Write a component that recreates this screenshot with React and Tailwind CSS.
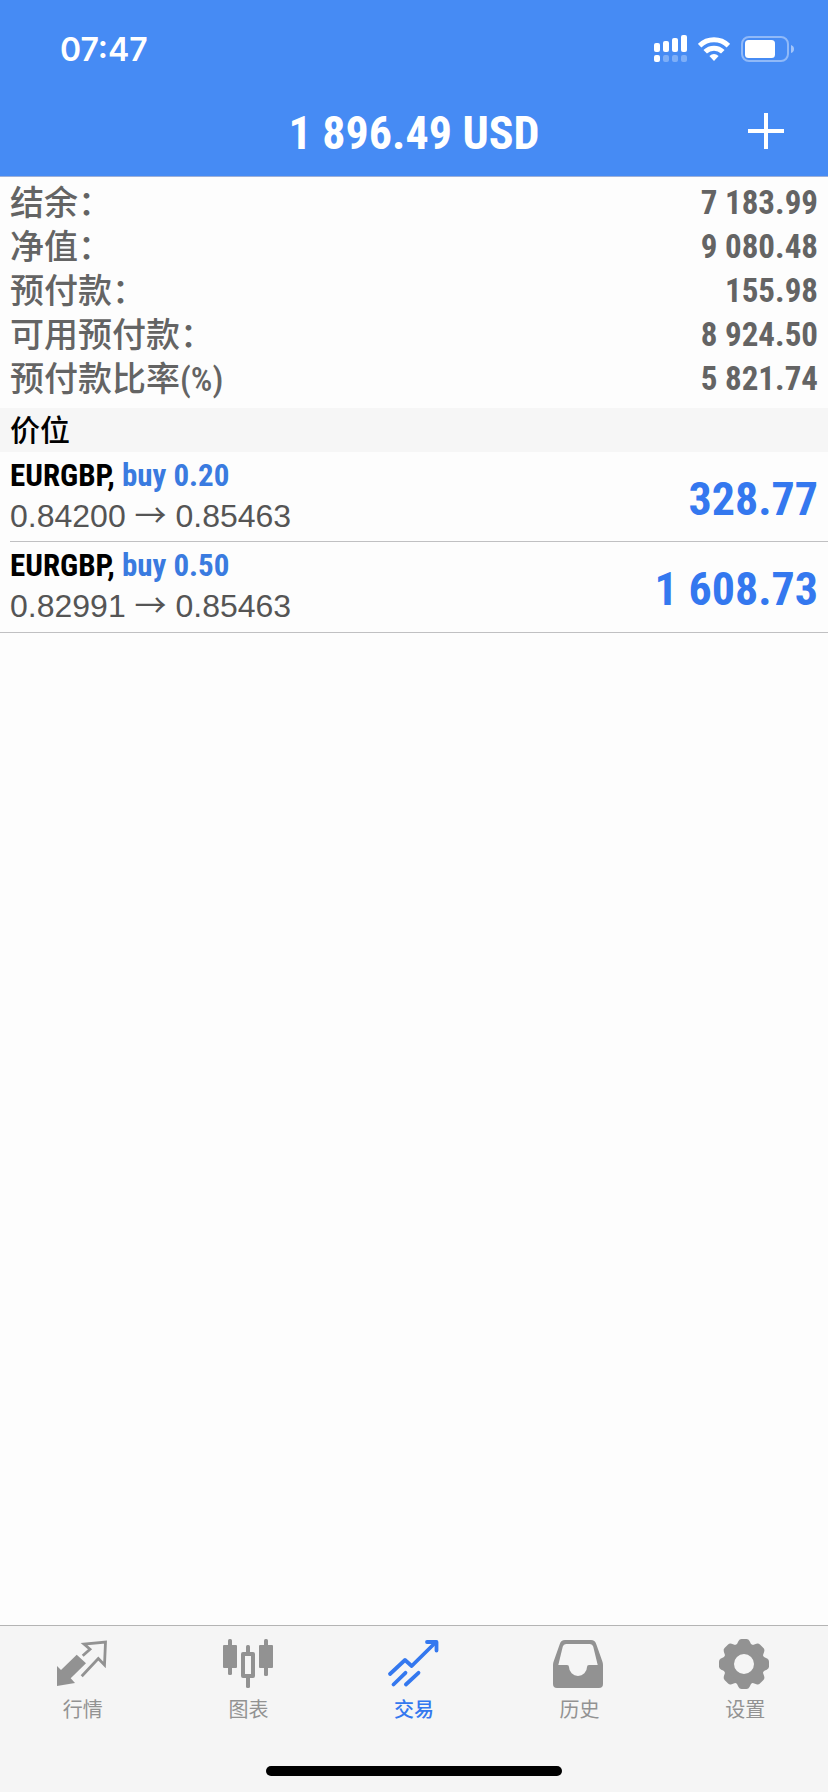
import { useState } from 'react';

const summary = [
  { label: '结余：', value: '7 183.99' },
  { label: '净值：', value: '9 080.48' },
  { label: '预付款：', value: '155.98' },
  { label: '可用预付款：', value: '8 924.50' },
  { label: '预付款比率(%)', value: '5 821.74' },
];

const positions = [
  { id: 1, symbol: 'EURGBP', side: 'buy 0.20', open: '0.84200', current: '0.85463', profit: '328.77' },
  { id: 2, symbol: 'EURGBP', side: 'buy 0.50', open: '0.82991', current: '0.85463', profit: '1 608.73' },
];

const toothAngles = [0, 45, 90, 135, 180, 225, 270, 315];

function QuotesIcon() {
  return (
    <svg viewBox="0 0 54 52" className="w-[54px] h-[52px]" aria-hidden="true">
      <path d="M1 28 L5 32 L20.7 16.7 L30 25.3 L14.7 40.3 L19 45 L1 48 Z" fill="currentColor" />
      <path
        d="M26.7 17.7 L34 11.3 L28 6 L49.5 4 L48.5 27 L42.3 20.5 L25.7 38.3"
        fill="none"
        stroke="currentColor"
        strokeWidth="2.8"
      />
    </svg>
  );
}

function ChartIcon() {
  return (
    <svg viewBox="0 0 54 52" className="w-[54px] h-[52px]" fill="currentColor" aria-hidden="true">
      <rect x="2" y="7" width="14" height="23" rx="1" />
      <rect x="7" y="1" width="4" height="36" rx="1.5" />
      <rect x="25" y="7" width="4" height="9" rx="1.5" />
      <rect x="25" y="38" width="4" height="12" rx="1.5" />
      <rect x="22" y="16" width="10" height="22" fill="none" stroke="currentColor" strokeWidth="4" strokeLinejoin="round" />
      <rect x="38" y="7" width="14" height="23" rx="1" />
      <rect x="43" y="1" width="4" height="37" rx="1.5" />
    </svg>
  );
}

function TradeIcon() {
  return (
    <svg
      viewBox="0 0 54 52"
      className="w-[54px] h-[52px]"
      fill="none"
      stroke="currentColor"
      strokeWidth="3.8"
      strokeLinecap="round"
      strokeLinejoin="round"
      aria-hidden="true"
    >
      <path d="M3 36 L18 22 L24.7 28 L48 5" />
      <path d="M40 4 H49.5 V12.5" />
      <path d="M6.5 46.5 L18.5 34.8" />
      <path d="M18.9 46.5 L31.5 34.8" />
    </svg>
  );
}

function HistoryIcon() {
  return (
    <svg viewBox="0 0 54 52" className="w-[54px] h-[52px]" fill="currentColor" aria-hidden="true">
      <path
        fillRule="evenodd"
        d="M12 2 H38 Q42 2 43.2 6 L49.2 23 Q50 25 50 27 V46 Q50 50 46 50 H4 Q0 50 0 46 V27 Q0 25 0.8 23 L6.8 6 Q8 2 12 2 Z
           M13 6 Q10.5 6 9.8 8.5 L5.3 27 H14 Q16 27 16 29 A9 9 0 0 0 34 29 Q34 27 36 27 H44.7 L40.2 8.5 Q39.5 6 37 6 Z"
      />
    </svg>
  );
}

function SettingsIcon() {
  return (
    <svg viewBox="0 0 54 52" className="w-[54px] h-[52px]" fill="currentColor" aria-hidden="true">
      <circle cx="26" cy="26" r="15.5" fill="none" stroke="currentColor" strokeWidth="11" />
      {toothAngles.map((angle) => (
        <path key={angle} d="M17.5 9 L20.5 3 Q21.5 1 23.5 1 H28.5 Q30.5 1 31.5 3 L34.5 9 Z" transform={`rotate(${angle} 26 26)`} />
      ))}
    </svg>
  );
}

const tabs = [
  { id: 'quotes', label: '行情', Icon: QuotesIcon },
  { id: 'chart', label: '图表', Icon: ChartIcon },
  { id: 'trade', label: '交易', Icon: TradeIcon },
  { id: 'history', label: '历史', Icon: HistoryIcon },
  { id: 'settings', label: '设置', Icon: SettingsIcon },
];

function StatusBar() {
  return (
    <div className="flex items-center justify-between h-[98px] pl-[60px] pr-[34px]">
      <span className="pt-0.5 font-['Inter',sans-serif] text-[32px] font-semibold">07:47</span>
      <div className="flex items-center gap-[11px]">
        {/* cellular, two SIMs */}
        <svg viewBox="0 0 33 28" className="w-[33px] h-7" fill="currentColor" aria-hidden="true">
          <rect x="0" y="8" width="6" height="9" rx="2" />
          <rect x="9" y="6" width="6" height="11" rx="2" />
          <rect x="18" y="3" width="6" height="14" rx="2" />
          <rect x="27" y="0" width="6" height="17" rx="2" />
          <rect x="0" y="20" width="6" height="7" rx="2" />
          <rect x="9" y="20" width="6" height="7" rx="2" opacity="0.3" />
          <rect x="18" y="20" width="6" height="7" rx="2" opacity="0.3" />
          <rect x="27" y="20" width="6" height="7" rx="2" opacity="0.3" />
        </svg>
        <svg viewBox="0 0 32 26" className="w-8 h-[26px]" fill="none" stroke="currentColor" strokeWidth="5" aria-hidden="true">
          <path d="M1.6 9.6 A20.5 20.5 0 0 1 30.4 9.6" />
          <path d="M7.2 15.8 A12.5 12.5 0 0 1 24.8 15.8" />
          <path d="M11.4 20 Q16 16.2 20.6 20 L16 25 Z" fill="currentColor" stroke="none" />
        </svg>
        <svg viewBox="0 0 53 26" className="w-[53px] h-[26px]" aria-hidden="true">
          <rect x="1" y="1" width="46" height="24" rx="7" fill="none" stroke="currentColor" strokeWidth="2" opacity="0.4" />
          <rect x="4" y="4" width="30" height="18" rx="3.5" fill="currentColor" />
          <path d="M50 9 Q53 10 53 13 T50 17 Z" fill="currentColor" opacity="0.5" />
        </svg>
      </div>
    </div>
  );
}

export default function App() {
  const [activeTab, setActiveTab] = useState('trade');

  return (
    <div className="min-h-screen flex flex-col bg-[#fdfdfd] font-['Roboto_Condensed','Liberation_Sans','Noto_Sans_CJK_SC',sans-serif]">
      <header className="bg-[#468bf4] text-white border-b border-[#9db0d8]">
        <StatusBar />
        <div className="grid grid-cols-[1fr_auto_1fr] items-center h-[78px] px-[42px] pb-3">
          <h1 className="col-start-2 pt-1 text-[46px] leading-none font-bold">1 896.49 USD</h1>
          <button type="button" aria-label="新订单" className="justify-self-end">
            <svg viewBox="0 0 40 40" className="w-10 h-10" stroke="currentColor" strokeWidth="4" aria-hidden="true">
              <path d="M20 2 V38 M2 20 H38" />
            </svg>
          </button>
        </div>
      </header>

      <main className="flex-1">
        <dl className="pt-1 pb-[7px] text-[#646464]">
          {summary.map((row) => (
            <div key={row.label} className="flex items-center justify-between h-11 px-[10px] leading-[44px]">
              <dt className="text-[34px] font-medium">{row.label}</dt>
              <dd className="text-[33px] font-bold">{row.value}</dd>
            </div>
          ))}
        </dl>

        <h2 className="h-11 px-[10px] bg-[#f6f6f6] text-[30px] leading-[46px] font-medium text-black">价位</h2>

        <ul className="border-b border-[#c0c0c2]">
          {positions.map((p) => (
            <li key={p.id} className="pl-[10px] group">
              <div className="flex items-center justify-between h-[90px] pr-[10px] border-b border-[#c0c0c2] group-last:border-b-0">
                <div className="pb-0.5">
                  <div className="text-[31px] leading-10 font-bold text-black">
                    {p.symbol}, <span className="text-[#3a7be0]">{p.side}</span>
                  </div>
                  <div className="font-['Liberation_Sans',sans-serif] text-[32px] leading-10 text-[#555555]">
                    {p.open} <span className="font-['Noto_Sans_CJK_SC',sans-serif] leading-none">→</span> {p.current}
                  </div>
                </div>
                <span className="pt-1 text-[46px] leading-none font-bold text-[#3478ef]">{p.profit}</span>
              </div>
            </li>
          ))}
        </ul>
      </main>

      <nav className="bg-[#f5f5f5] border-t border-[#b4b4b4]">
        <div className="grid grid-cols-5 pt-3">
          {tabs.map(({ id, label, Icon }) => (
            <button
              key={id}
              type="button"
              onClick={() => setActiveTab(id)}
              className={`flex flex-col items-center gap-1.5 ${activeTab === id ? 'text-[#3478ef] font-medium' : 'text-[#929292]'}`}
            >
              <Icon />
              <span className="text-[20px] leading-7">{label}</span>
            </button>
          ))}
        </div>
        <div className="flex justify-center pt-[42px] pb-4">
          <div className="w-[296px] h-[10px] rounded-full bg-black" />
        </div>
      </nav>
    </div>
  );
}
